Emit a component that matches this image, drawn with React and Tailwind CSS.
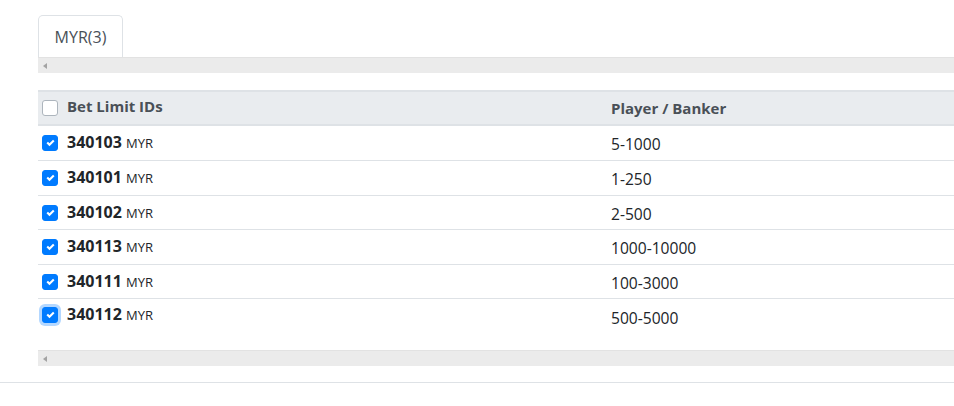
import React from 'react';

const ROWS = [
  { id: '340103', value: '5-1000', h: 'h-[35px]' },
  { id: '340101', value: '1-250', h: 'h-[35px]' },
  { id: '340102', value: '2-500', h: 'h-[34px]' },
  { id: '340113', value: '1000-10000', h: 'h-[35px]' },
  { id: '340111', value: '100-3000', h: 'h-[34px]' },
  { id: '340112', value: '500-5000', h: 'h-[42px]', focus: true },
];

const Check = ({ checked, focus }) => (
  <span
    className={`flex items-center justify-center w-[16px] h-[16px] rounded-[3px] shrink-0 ${
      checked ? 'bg-[#007bff] border border-[#007bff]' : 'bg-white border border-[#adb5bd]'
    } ${focus ? 'ring-[3px] ring-[#80bdff]/60' : ''}`}
  >
    {checked && (
      <svg width="9" height="8" viewBox="0 0 8 8">
        <path fill="#fff" d="M6.564.75l-3.59 3.612-1.538-1.55L0 4.26l2.974 2.99L8 2.193z" />
      </svg>
    )}
  </span>
);

const ScrollBar = () => (
  <div className="h-[16px] bg-[#ebebeb] border-t border-[#e2e2e2] flex items-center pl-[5px]">
    <span className="w-0 h-0 border-y-[3px] border-y-transparent border-r-[4px] border-r-[#a3a3a3]" />
  </div>
);

export default function App() {
  return (
    <div className="w-[954px] h-[406px] bg-white overflow-hidden text-[#212529]" style={{ fontFamily: '"Open Sans", "Noto Sans", sans-serif' }}>
      <div className="pl-[38px] pt-[15px]">
        <div className="w-[85px] h-[42px] border border-b-0 border-[#dee2e6] rounded-t-[5px] flex items-center justify-center text-[16px] text-[#495057]">
          MYR(3)
        </div>
        <ScrollBar />

        <div className="mt-[17px]">
          <div className="flex h-[36px] bg-[#e9ecef] border-y-2 border-y-[#dee2e6] items-center text-[15px] font-bold text-[#495057]">
            <div className="w-[561px] flex items-center pl-[4px] gap-[9px]">
              <Check checked={false} />
              <span className="-mt-[4px]">Bet Limit IDs</span>
            </div>
            <div className="pl-[12px]">Player / Banker</div>
          </div>

          {ROWS.map((r, i) => {
            const last = i === ROWS.length - 1;
            return (
              <div
                key={r.id}
                className={`flex ${r.h} ${last ? '' : 'border-b border-[#dee2e6]'}`}
              >
                <div className={`w-[561px] flex items-start pl-[4px] gap-[9px] ${last ? 'pt-[5px]' : 'pt-[6px]'}`}>
                  <span className="mt-[3px]"><Check checked focus={r.focus} /></span>
                  <span className="leading-[20px]">
                    <span className="text-[16px] font-bold">{r.id}</span>{' '}
                    <span className="text-[13px]">MYR</span>
                  </span>
                </div>
                <div className={`pl-[12px] text-[15.6px] leading-[20px] ${last ? 'pt-[9px]' : 'pt-[8px]'}`}>{r.value}</div>
              </div>
            );
          })}
          <div className="h-[9px]" />
          <ScrollBar />
        </div>
      </div>
      <div className="mt-[16px] border-t border-[#dee2e6]" />
    </div>
  );
}
